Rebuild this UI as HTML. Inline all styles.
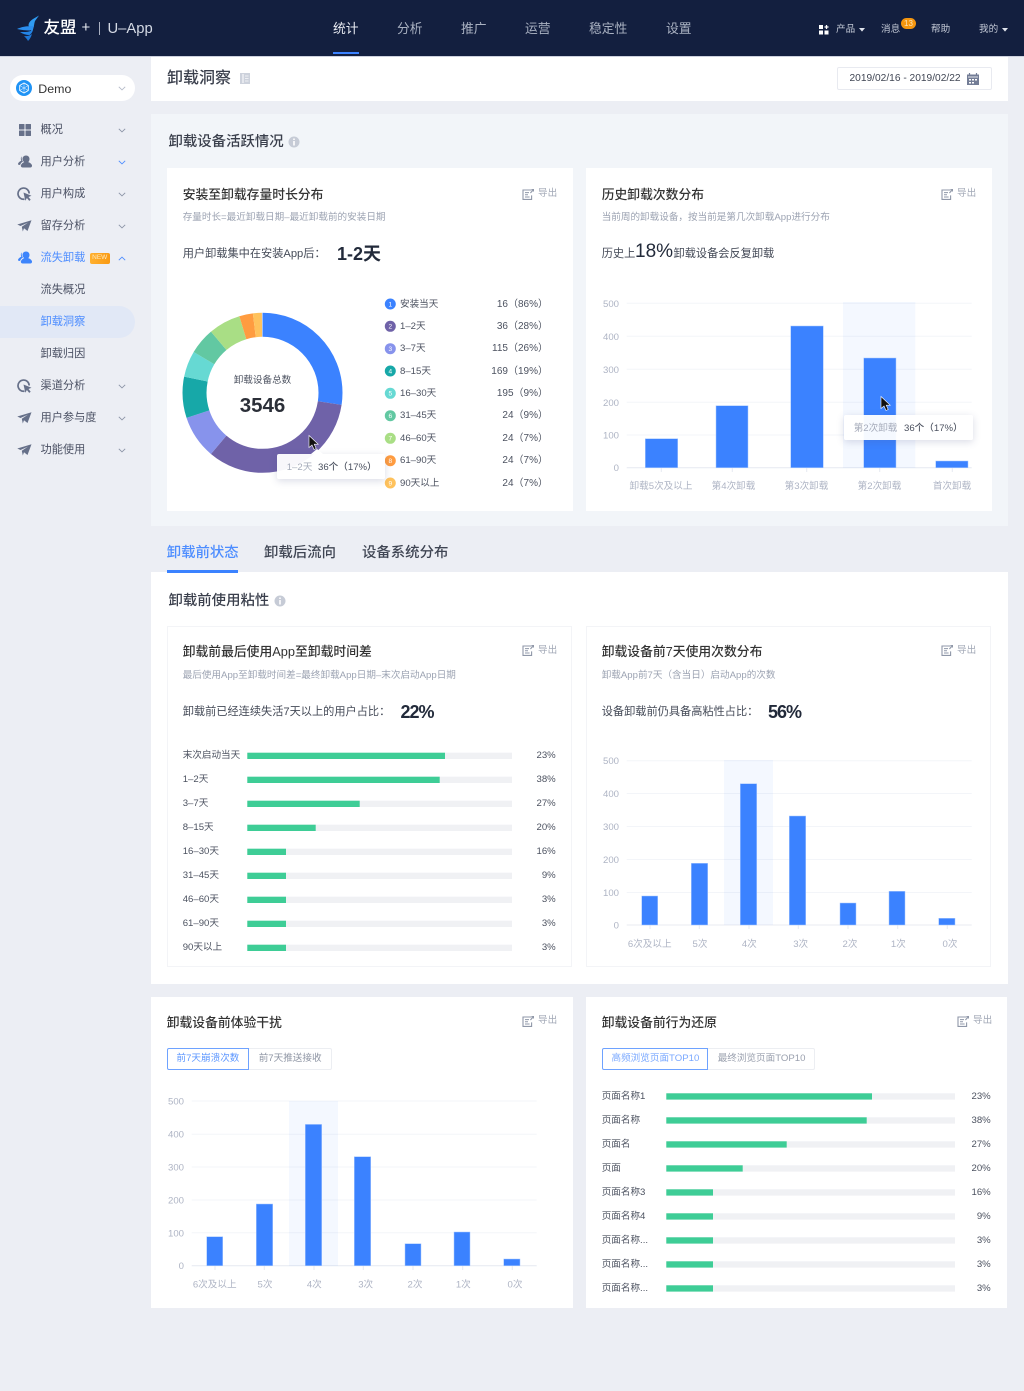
<!DOCTYPE html>
<html lang="zh-CN">
<head>
<meta charset="utf-8">
<title>卸载洞察</title>
<style>
html,body{margin:0;padding:0}
body{position:relative;width:1024px;height:1391px;overflow:hidden;background:#eceef4;font-family:"Liberation Sans","Noto Sans CJK SC",sans-serif;color:#3a3f4c}
.b{position:absolute}
.t{position:absolute;white-space:nowrap;line-height:20px;height:20px;font-size:9.6px;margin-top:.8px}
.r{text-align:right}
.nav{font-size:12.8px;color:#aab2c2}
.top{font-size:9.6px;color:#c3c9d6}
.side{font-size:11.2px;color:#4a5063;left:40.5px}
.blue{color:#4d8dff}
.ct{font-size:12.8px;color:#333;font-weight:500}
.sub{font-size:9.6px;color:#9ca3b2}
.lab{font-size:11.2px;color:#444a57}
.big{font-size:18px;letter-spacing:-1px;font-weight:bold;color:#222a3a}
.ex{font-size:9.6px;color:#a3a9b7}
.lg{font-size:9.6px;color:#4c5260}
.lg.r{font-size:10px;right:476px}
.hl{font-size:9.6px;color:#4c5260}
.sec{font-size:14.4px;color:#3a3f4c;font-weight:500}
svg{position:absolute;overflow:visible}
.tip{position:absolute;background:#fff;box-shadow:0 2px 8px rgba(70,80,130,.2);border-radius:2px}
</style>
</head>
<body>
<svg width="0" height="0" style="position:absolute">
<symbol id="exp" viewBox="0 0 12 12"><path d="M9.6 2H1v9.4h8.6V7.4" fill="none" stroke="#8f97a8" stroke-width="1.1"/><path d="M3 4.6h4M3 6.8h3M3 9h4.6" stroke="#8f97a8" stroke-width="1"/><path d="M8 4.6l2.4-2.6L9 1h3v3l-1-1-2.2 2.4z" fill="#8f97a8"/></symbol>
<symbol id="user" viewBox="0 0 14 13"><path d="M8 .5c2.2 0 3.5 1.6 3.5 3.5 0 1.300-.5 2.400-1.300 3.100 1.900.6 3.300 1.700 3.800 3.100.2.900-.4 2.300-1.700 2.300H4.800c-1.500 0-2.300-1.200-1.900-2.300.5-1.400 1.800-2.500 3.300-3.100C5.200 6.400 4.500 5.300 4.500 4 4.500 2 5.900.5 8 .5z" fill="currentColor"/><path d="M3.800 1.500C2.400 2.400 2.800 4.600 3.300 5.700 1.800 6.300.4 7.400.1 8.500c-.2.700.2 1.400 1 1.500l1.100-.2C2.600 8.200 3.700 7.200 5 6.500 3.800 5.200 3.300 3.200 3.800 1.500z" fill="currentColor"/></symbol>
<symbol id="cur" viewBox="0 0 15 14"><path d="M7.500 12.200A5.600 5.600 0 1 1 12.200 6.500" fill="none" stroke="currentColor" stroke-width="1.700"/><path d="M6.500 5.500l8 3.200-3 1.300 2.200 2.800-1.500 1.100-2.300-2.900-1.600 2.800z" fill="currentColor"/></symbol>
<symbol id="pl" viewBox="0 0 15 12"><path d="M.3 4.500L14.500.3 10.500 11 7 8.200 5.800 11.500 4.800 6.800 11 2.600 3.500 6z" fill="currentColor"/></symbol>
<symbol id="dn" viewBox="0 0 8 5"><path d="M.8.8L4 3.900 7.200.8" fill="none" stroke="currentColor" stroke-width=".9"/></symbol>
</svg>

<!-- header -->
<div class="b" style="left:0;top:0;width:1024px;height:56px;background:#131f3f"></div>
<div class="b" style="left:0;top:56px;width:1024px;height:1px;background:#cdd1de"></div>
<svg style="left:0;top:0" width="60" height="56">
<path d="M39 15.500L33 19c-3 2-4.500 4-4.500 6.500L32 32c2-4 2-8 3-11z" fill="#2f9bf2"/>
<path d="M17 29c4-2 9-3 17-3-1 3-2 4-4 4.500-4 0-9-.5-13-1.500z" fill="#2b8eee"/>
<path d="M20 32c4 0 8 .5 13-2-1 3-2 4-3.500 5-3.500 0-6.500-1-9.500-3z" fill="#2384e6"/>
<path d="M24 36c3 .5 5 0 8-2-1 3-2 5-4 7-1-2-2-3-4-5z" fill="#1e78d8"/>
</svg>
<div class="t" style="left:43.500px;top:17.500px;font-size:16.500px;color:#fff;font-weight:500">友盟</div>
<div class="t" style="left:81.500px;top:17.500px;font-size:15px;color:#e6e9f0">+</div>
<div class="b" style="left:98.500px;top:22px;width:1px;height:13px;background:#a8afc0"></div>
<div class="t" style="left:107.500px;top:18.500px;font-size:14.800px;color:#d5dae5">U–App</div>

<div class="t nav" style="left:333px;top:18.700px;color:#e8ebf2">统计</div>
<div class="b" style="left:333px;top:51.500px;width:25.500px;height:2.500px;background:#3b82ff"></div>
<div class="t nav" style="left:397px;top:18.700px">分析</div>
<div class="t nav" style="left:461px;top:18.700px">推广</div>
<div class="t nav" style="left:525px;top:18.700px">运营</div>
<div class="t nav" style="left:589px;top:18.700px">稳定性</div>
<div class="t nav" style="left:666px;top:18.700px">设置</div>

<svg style="left:819px;top:25px" width="10" height="10"><path d="M0 0h4v4H0zM0 5.500h4v4H0zM5.500 5.500h4v4h-4z" fill="#fff"/><path d="M7.500 0v4M5.500 2h4" stroke="#fff" stroke-width="1.300"/></svg>
<div class="t top" style="left:836px;top:19.700px">产品</div>
<svg style="left:858.500px;top:27.500px" width="6" height="4"><path d="M0 0h6L3 3.600z" fill="#dfe3ec"/></svg>
<div class="t top" style="left:881px;top:19.700px">消息</div>
<div class="b" style="left:901px;top:18px;width:15px;height:11px;border-radius:6px;background:#f5960f;color:#fde3b8;font-size:8px;line-height:11px;text-align:center">13</div>
<div class="t top" style="left:931px;top:19.700px">帮助</div>
<div class="t top" style="left:979px;top:19px">我的</div>
<svg style="left:1001.500px;top:27.500px" width="6" height="4"><path d="M0 0h6L3 3.600z" fill="#dfe3ec"/></svg>

<!-- sidebar -->
<div class="b" style="left:10px;top:75px;width:124.500px;height:26px;border-radius:13px;background:#fff"></div>
<svg style="left:16px;top:80px" width="16" height="16"><circle cx="8" cy="8" r="8" fill="#1f93f5"/><path d="M8 3l4.300 2.500v5L8 13l-4.300-2.500v-5z" fill="none" stroke="#fff" stroke-width=".9"/><path d="M3.700 5.500L12.300 10.500M12.300 5.500L3.700 10.500M8 3v10" stroke="#cfe8ff" stroke-width=".6"/></svg>
<div class="t" style="left:38.300px;top:78.500px;font-size:12.400px;color:#333">Demo</div>
<svg style="left:118px;top:86px;color:#b4bac8" width="8" height="5"><use href="#dn"/></svg>

<div class="b" style="left:0;top:305.500px;width:134.500px;height:32px;border-radius:0 16px 16px 0;background:#e1e8f6"></div>

<svg style="left:18.500px;top:124px" width="12" height="12"><path d="M.5 0h4.500a.5.500 0 0 1 .5.500V5a.5.500 0 0 1-.5.500H.5A.5.500 0 0 1 0 5V.5A.5.500 0 0 1 .5 0zM7 0h4.500a.5.500 0 0 1 .5.500V5a.5.500 0 0 1-.5.500H7a.5.500 0 0 1-.5-.5V.5A.5.500 0 0 1 7 0zM.5 6.500H5a.5.500 0 0 1 .5.500v4.500A.5.500 0 0 1 5 12H.5a.5.500 0 0 1-.5-.5V7a.5.500 0 0 1 .5-.5zM7 6.500h4.500A.5.500 0 0 1 12 7v4.500a.5.500 0 0 1-.5.500H7a.5.500 0 0 1-.5-.5V7a.5.500 0 0 1 .5-.5z" fill="#667089"/></svg>
<div class="t side" style="top:119.700px">概况</div>
<svg style="left:118px;top:127.500px;color:#8b93a6" width="8" height="5"><use href="#dn"/></svg>

<svg style="left:17.500px;top:155px;color:#667089" width="14" height="13"><use href="#user"/></svg>
<div class="t side" style="top:151.700px">用户分析</div>
<svg style="left:118px;top:159.500px;color:#4d8dff" width="8" height="5"><use href="#dn"/></svg>

<svg style="left:17px;top:187px;color:#667089" width="15" height="14"><use href="#cur"/></svg>
<div class="t side" style="top:183.700px">用户构成</div>
<svg style="left:118px;top:191.500px;color:#8b93a6" width="8" height="5"><use href="#dn"/></svg>

<svg style="left:17px;top:220px;color:#667089" width="15" height="12"><use href="#pl"/></svg>
<div class="t side" style="top:215.700px">留存分析</div>
<svg style="left:118px;top:223.500px;color:#8b93a6" width="8" height="5"><use href="#dn"/></svg>

<svg style="left:17.500px;top:251px;color:#3d84fb" width="14" height="13"><use href="#user"/></svg>
<div class="t side blue" style="top:247.700px">流失卸载</div>
<div class="b" style="left:90px;top:253px;width:19.500px;height:10.500px;border-radius:2px;background:linear-gradient(90deg,#ffb02e,#f99a14);color:#ffe9bd;font-size:6.500px;line-height:10.500px;text-align:center">NEW</div>
<svg style="left:118px;top:255.500px;color:#4d8dff;transform:rotate(180deg)" width="8" height="5"><use href="#dn"/></svg>

<div class="t side" style="top:279.700px">流失概况</div>
<div class="t side blue" style="top:311.700px">卸载洞察</div>
<div class="t side" style="top:343.700px">卸载归因</div>

<svg style="left:17px;top:379px;color:#667089" width="15" height="14"><use href="#cur"/></svg>
<div class="t side" style="top:375.700px">渠道分析</div>
<svg style="left:118px;top:383.500px;color:#8b93a6" width="8" height="5"><use href="#dn"/></svg>

<svg style="left:17px;top:412px;color:#667089" width="15" height="12"><use href="#pl"/></svg>
<div class="t side" style="top:407.700px">用户参与度</div>
<svg style="left:118px;top:415.500px;color:#8b93a6" width="8" height="5"><use href="#dn"/></svg>

<svg style="left:17px;top:444px;color:#667089" width="15" height="12"><use href="#pl"/></svg>
<div class="t side" style="top:439.700px">功能使用</div>
<svg style="left:118px;top:447.500px;color:#8b93a6" width="8" height="5"><use href="#dn"/></svg>

<!-- title bar -->
<div class="b" style="left:151px;top:57px;width:857px;height:44px;background:#fff"></div>
<div class="t" style="left:167px;top:68.500px;font-size:16px;color:#3a3f4c;font-weight:500">卸载洞察</div>
<svg style="left:240px;top:73px" width="10" height="11"><path d="M0 0h10v11H0z" fill="#cdd2dc"/><path d="M3 1v9" stroke="#fff"/><path d="M5 3h3.500M5 5.500h3.500M5 8h3.500" stroke="#eef0f4"/></svg>
<div class="b" style="left:837px;top:67px;width:152.700px;height:20.700px;border:1px solid #e8eaf0;border-radius:2px;background:#fff"></div>
<div class="t" style="left:849.500px;top:68.500px;font-size:10.200px;color:#3f4553">2019/02/16 - 2019/02/22</div>
<svg style="left:967px;top:72.500px" width="12" height="12"><path d="M0 1.500h12V12H0z" fill="#737d96"/><path d="M2.500 0v3M9.500 0v3" stroke="#737d96" stroke-width="1.200"/><path d="M1 4h10" stroke="#fff" stroke-width=".8"/><path d="M2 6h2v1.500H2zM5 6h2v1.500H5zM8 6h2v1.500H8zM2 9h2v1.500H2zM5 9h2v1.500H5z" fill="#fff"/></svg>

<!-- section 1 -->
<div class="b" style="left:151px;top:114px;width:857px;height:411.500px;background:#f2f5f9"></div>
<div class="t sec" style="left:168.500px;top:131.500px">卸载设备活跃情况</div>
<svg style="left:288px;top:136px" width="12" height="12"><circle cx="6" cy="6" r="5.500" fill="#c6cbd6"/><path d="M5.200 2.500h1.600v1.500H5.200zM5.200 5h1.600v4.500H5.200z" fill="#fff"/></svg>
<div class="b" style="left:167px;top:168px;width:405.500px;height:342.500px;background:#fff"></div>
<div class="b" style="left:585.500px;top:168px;width:406.500px;height:342.500px;background:#fff"></div>

<!-- section 2 -->
<div class="t" style="left:166.700px;top:542.500px;font-size:14.400px;color:#4d8dff;font-weight:500">卸载前状态</div>
<div class="t" style="left:264px;top:542.500px;font-size:14.400px;color:#3f4553;font-weight:500">卸载后流向</div>
<div class="t" style="left:362px;top:542.500px;font-size:14.400px;color:#3f4553;font-weight:500">设备系统分布</div>
<div class="b" style="left:151px;top:572px;width:857px;height:412px;background:#fff"></div>
<div class="b" style="left:166.700px;top:569.500px;width:71.800px;height:3px;background:#3b82ff"></div>
<div class="t sec" style="left:168.500px;top:590px">卸载前使用粘性</div>
<svg style="left:274px;top:594.500px" width="12" height="12"><circle cx="6" cy="6" r="5.500" fill="#c6cbd6"/><path d="M5.200 2.500h1.600v1.500H5.200zM5.200 5h1.600v4.500H5.200z" fill="#fff"/></svg>
<div class="b" style="left:166.700px;top:626px;width:403.600px;height:339.300px;border:1px solid #f3f4f7"></div>
<div class="b" style="left:585.500px;top:626px;width:403.500px;height:339.300px;border:1px solid #f3f4f7"></div>

<!-- bottom cards -->
<div class="b" style="left:151px;top:997px;width:421.500px;height:310.700px;background:#fff"></div>
<div class="b" style="left:585.500px;top:997px;width:421.500px;height:310.700px;background:#fff"></div>

<!-- card text -->
<div class="t ct" style="left:182.700px;top:184px">安装至卸载存量时长分布</div>
<div class="t sub" style="left:182.700px;top:207.700px">存量时长=最近卸载日期–最近卸载前的安装日期</div>
<div class="t lab" style="left:182.700px;top:243px">用户卸载集中在安装App后：</div>
<div class="t big" style="left:337px;top:243px;letter-spacing:0">1-2天</div>

<div class="t ct" style="left:601.700px;top:184px">历史卸载次数分布</div>
<div class="t sub" style="left:601.700px;top:207.700px">当前周的卸载设备，按当前是第几次卸载App进行分布</div>
<div class="t lab" style="left:601.700px;top:243.700px">历史上</div>
<div class="t" style="left:635px;top:241.500px;font-size:19px;color:#222a3a">18%</div>
<div class="t lab" style="left:673.500px;top:243.700px">卸载设备会反复卸载</div>

<div class="t ct" style="left:182.700px;top:641.700px">卸载前最后使用App至卸载时间差</div>
<div class="t sub" style="left:182.700px;top:665px">最后使用App至卸载时间差=最终卸载App日期–末次启动App日期</div>
<div class="t lab" style="left:182.700px;top:701.300px">卸载前已经连续失活7天以上的用户占比：</div>
<div class="t big" style="left:400.500px;top:701.300px">22%</div>

<div class="t ct" style="left:601.700px;top:641.700px">卸载设备前7天使用次数分布</div>
<div class="t sub" style="left:601.700px;top:665px">卸载App前7天（含当日）启动App的次数</div>
<div class="t lab" style="left:601.700px;top:701.300px">设备卸载前仍具备高粘性占比：</div>
<div class="t big" style="left:768px;top:701.300px">56%</div>

<div class="t ct" style="left:166.700px;top:1012.300px">卸载设备前体验干扰</div>
<div class="t ct" style="left:601.700px;top:1012.300px">卸载设备前行为还原</div>

<!-- export -->
<svg style="left:522px;top:188px" width="12" height="12"><use href="#exp"/></svg><div class="t ex" style="left:538px;top:183.700px">导出</div>
<svg style="left:941px;top:188px" width="12" height="12"><use href="#exp"/></svg><div class="t ex" style="left:957px;top:183.700px">导出</div>
<svg style="left:522px;top:644px" width="12" height="12"><use href="#exp"/></svg><div class="t ex" style="left:538px;top:640px">导出</div>
<svg style="left:941px;top:644px" width="12" height="12"><use href="#exp"/></svg><div class="t ex" style="left:957px;top:640px">导出</div>
<svg style="left:522px;top:1015px" width="12" height="12"><use href="#exp"/></svg><div class="t ex" style="left:538px;top:1010.700px">导出</div>
<svg style="left:957px;top:1015px" width="12" height="12"><use href="#exp"/></svg><div class="t ex" style="left:973px;top:1010.700px">导出</div>

<!-- toggle tabs -->
<div class="b" style="left:248px;top:1047.700px;width:81.700px;height:20.300px;border:1px solid #eceef2;border-radius:0 2px 2px 0"></div>
<div class="b" style="left:166.700px;top:1047.700px;width:80.300px;height:20.300px;border:1px solid #6ea2ff;border-radius:2px 0 0 2px;background:#fff"></div>
<div class="t" style="left:176.500px;top:1048.700px;color:#5d97ff">前7天崩溃次数</div>
<div class="t" style="left:258.700px;top:1048.700px;color:#8d94a3">前7天推送接收</div>
<div class="b" style="left:706px;top:1047.700px;width:106.700px;height:20.300px;border:1px solid #eceef2;border-radius:0 2px 2px 0"></div>
<div class="b" style="left:601.500px;top:1047.700px;width:104.200px;height:20.300px;border:1px solid #6ea2ff;border-radius:2px 0 0 2px;background:#fff"></div>
<div class="t" style="left:611.500px;top:1048.700px;color:#7aa8ff">高频浏览页面TOP10</div>
<div class="t" style="left:717.700px;top:1048.700px;color:#9aa0ae">最终浏览页面TOP10</div>

<!-- charts -->
<svg style="left:0;top:0" width="1024" height="1391">
<!-- donut -->
<g fill="none" stroke-width="24" transform="rotate(-90 262.500 392.800)">
<circle cx="262.500" cy="392.800" r="68" pathLength="360" stroke="#3b82ff" stroke-dasharray="98.800 360"/>
<circle cx="262.500" cy="392.800" r="68" pathLength="360" stroke="#6f62a8" stroke-dasharray="121.600 360" stroke-dashoffset="-98.800"/>
<circle cx="262.500" cy="392.800" r="68" pathLength="360" stroke="#8793ec" stroke-dasharray="31.600 360" stroke-dashoffset="-220.400"/>
<circle cx="262.500" cy="392.800" r="68" pathLength="360" stroke="#17a8a8" stroke-dasharray="30 360" stroke-dashoffset="-252"/>
<circle cx="262.500" cy="392.800" r="68" pathLength="360" stroke="#66d9d3" stroke-dasharray="19 360" stroke-dashoffset="-282"/>
<circle cx="262.500" cy="392.800" r="68" pathLength="360" stroke="#62c8a2" stroke-dasharray="19.300 360" stroke-dashoffset="-301"/>
<circle cx="262.500" cy="392.800" r="68" pathLength="360" stroke="#a9de85" stroke-dasharray="23.300 360" stroke-dashoffset="-320.300"/>
<circle cx="262.500" cy="392.800" r="68" pathLength="360" stroke="#ff9c40" stroke-dasharray="9.900 360" stroke-dashoffset="-343.600"/>
<circle cx="262.500" cy="392.800" r="68" pathLength="360" stroke="#ffc25c" stroke-dasharray="6.500 360" stroke-dashoffset="-353.500"/>
</g>
<!-- legend dots -->
<g font-size="6.500" text-anchor="middle" fill="#fff">
<circle cx="390.300" cy="304" r="5.500" fill="#3b82ff"/><text x="390.300" y="306.300">1</text>
<circle cx="390.300" cy="326.300" r="5.500" fill="#6f62a8"/><text x="390.300" y="328.600">2</text>
<circle cx="390.300" cy="348.700" r="5.500" fill="#8793ec"/><text x="390.300" y="351">3</text>
<circle cx="390.300" cy="371" r="5.500" fill="#17a8a8"/><text x="390.300" y="373.300">4</text>
<circle cx="390.300" cy="393.300" r="5.500" fill="#66d9d3"/><text x="390.300" y="395.600">5</text>
<circle cx="390.300" cy="415.700" r="5.500" fill="#62c8a2"/><text x="390.300" y="418">6</text>
<circle cx="390.300" cy="438.300" r="5.500" fill="#a9de85"/><text x="390.300" y="440.600">7</text>
<circle cx="390.300" cy="460.700" r="5.500" fill="#ff9c40"/><text x="390.300" y="463">8</text>
<circle cx="390.300" cy="483" r="5.500" fill="#ffc25c"/><text x="390.300" y="485.300">9</text>
</g>

<!-- chart 1 -->
<g stroke="#f3f5f9" stroke-width="1"><path d="M626.700 303.300H971.700M626.700 336.300H971.700M626.700 369.300H971.700M626.700 402.300H971.700M626.700 435H971.700"/></g>
<path d="M626.700 467.700H971.700" stroke="#e6e9f1"/>
<path d="M661.300 468v4M732.300 468v4M806.700 468v4M879.700 468v4M952.300 468v4" stroke="#e6e9f1"/>
<rect x="843" y="302" width="72.300" height="166" fill="#3b82ff" fill-opacity=".055"/>
<g fill="#3b82ff" stroke="#a8c8ff" stroke-width=".5">
<rect x="645.300" y="438.700" width="32.400" height="29"/><rect x="716" y="405.700" width="32" height="62"/><rect x="790.700" y="326" width="32.600" height="141.700"/><rect x="863.700" y="358" width="32.300" height="109.700"/><rect x="935.700" y="461" width="32.300" height="6.700"/>
</g>
<g font-size="9.600" fill="#aeb4c4" text-anchor="end">
<text x="619" y="306.800">500</text><text x="619" y="339.800">400</text><text x="619" y="372.800">300</text><text x="619" y="405.800">200</text><text x="619" y="438.500">100</text><text x="619" y="471.200">0</text>
</g>
<g font-size="9.600" fill="#aeb4c4" text-anchor="middle">
<text x="661" y="489.200">卸载5次及以上</text><text x="733.500" y="489.200">第4次卸载</text><text x="806.500" y="489.200">第3次卸载</text><text x="879.500" y="489.200">第2次卸载</text><text x="952" y="489.200">首次卸载</text>
</g>

<!-- chart 2 -->
<path d="M626.700 760.700H971.700M626.700 793.500H971.700M626.700 826.500H971.700M626.700 859.500H971.700M626.700 892.500H971.700" stroke="#f3f5f9"/>
<path d="M626.700 925H971.700" stroke="#e9ebf2"/>
<path d="M650 925v4M699.300 925v4M749 925v4M798.300 925v4M848 925v4M897.700 925v4M947.300 925v4" stroke="#e6e9f1"/>
<rect x="724" y="760" width="49" height="165" fill="#3b82ff" fill-opacity=".055"/>
<g fill="#3b82ff" stroke="#a8c8ff" stroke-width=".5">
<rect x="641.700" y="896" width="16" height="29"/><rect x="691.300" y="863.300" width="16.400" height="61.700"/><rect x="740.300" y="783.700" width="16.400" height="141.300"/><rect x="789.300" y="816" width="16.400" height="109"/><rect x="840" y="903" width="16" height="22"/><rect x="889" y="891.300" width="16" height="33.700"/><rect x="938.700" y="918.300" width="16.300" height="6.700"/>
</g>
<g font-size="9.600" fill="#aeb4c4" text-anchor="end">
<text x="619" y="764.200">500</text><text x="619" y="797">400</text><text x="619" y="830">300</text><text x="619" y="863">200</text><text x="619" y="896">100</text><text x="619" y="928.500">0</text>
</g>
<g font-size="9.600" fill="#aeb4c4" text-anchor="middle">
<text x="649.700" y="946.800">6次及以上</text><text x="700" y="946.800">5次</text><text x="749.300" y="946.800">4次</text><text x="800.700" y="946.800">3次</text><text x="850" y="946.800">2次</text><text x="898.300" y="946.800">1次</text><text x="950" y="946.800">0次</text>
</g>

<!-- chart 3 -->
<path d="M191.700 1101H536.700M191.700 1134.200H536.700M191.700 1167H536.700M191.700 1200H536.700M191.700 1232.800H536.700" stroke="#f3f5f9"/>
<path d="M191.700 1265.700H536.700" stroke="#e6e9f1"/>
<path d="M215 1266v4M264.300 1266v4M314 1266v4M363.300 1266v4M413 1266v4M462.700 1266v4M512.300 1266v4" stroke="#e6e9f1"/>
<rect x="289" y="1101" width="49" height="165" fill="#3b82ff" fill-opacity=".055"/>
<g fill="#3b82ff" stroke="#a8c8ff" stroke-width=".5">
<rect x="206.700" y="1236.700" width="16" height="29"/><rect x="256.300" y="1204" width="16.400" height="61.700"/><rect x="305.300" y="1124.400" width="16.400" height="141.300"/><rect x="354.300" y="1156.700" width="16.400" height="109"/><rect x="405" y="1243.700" width="16" height="22"/><rect x="454" y="1232" width="16" height="33.700"/><rect x="503.700" y="1259" width="16.300" height="6.700"/>
</g>
<g font-size="9.600" fill="#aeb4c4" text-anchor="end">
<text x="184" y="1104.500">500</text><text x="184" y="1137.700">400</text><text x="184" y="1170.500">300</text><text x="184" y="1203.500">200</text><text x="184" y="1236.300">100</text><text x="184" y="1269.200">0</text>
</g>
<g font-size="9.600" fill="#aeb4c4" text-anchor="middle">
<text x="214.700" y="1287.500">6次及以上</text><text x="265" y="1287.500">5次</text><text x="314.300" y="1287.500">4次</text><text x="365.700" y="1287.500">3次</text><text x="415" y="1287.500">2次</text><text x="463.300" y="1287.500">1次</text><text x="515" y="1287.500">0次</text>
</g>

<!-- hbars left -->
<g fill="#f0f1f4">
<rect x="247.300" y="752.700" width="264.700" height="6.300"/><rect x="247.300" y="776.700" width="264.700" height="6.300"/><rect x="247.300" y="800.700" width="264.700" height="6.300"/><rect x="247.300" y="824.700" width="264.700" height="6.300"/><rect x="247.300" y="848.700" width="264.700" height="6.300"/><rect x="247.300" y="872.700" width="264.700" height="6.300"/><rect x="247.300" y="896.700" width="264.700" height="6.300"/><rect x="247.300" y="920.700" width="264.700" height="6.300"/><rect x="247.300" y="944.700" width="264.700" height="6.300"/>
</g>
<g fill="#3ecd96">
<rect x="247.300" y="752.700" width="197.700" height="6.300"/><rect x="247.300" y="776.700" width="192.400" height="6.300"/><rect x="247.300" y="800.700" width="112.400" height="6.300"/><rect x="247.300" y="824.700" width="68.400" height="6.300"/><rect x="247.300" y="848.700" width="38.700" height="6.300"/><rect x="247.300" y="872.700" width="38.700" height="6.300"/><rect x="247.300" y="896.700" width="38.700" height="6.300"/><rect x="247.300" y="920.700" width="38.700" height="6.300"/><rect x="247.300" y="944.700" width="38.700" height="6.300"/>
</g>
<!-- hbars right -->
<g fill="#f0f1f4">
<rect x="666.300" y="1093.300" width="288.700" height="6.300"/><rect x="666.300" y="1117.300" width="288.700" height="6.300"/><rect x="666.300" y="1141.300" width="288.700" height="6.300"/><rect x="666.300" y="1165.300" width="288.700" height="6.300"/><rect x="666.300" y="1189.300" width="288.700" height="6.300"/><rect x="666.300" y="1213.300" width="288.700" height="6.300"/><rect x="666.300" y="1237.300" width="288.700" height="6.300"/><rect x="666.300" y="1261.300" width="288.700" height="6.300"/><rect x="666.300" y="1285.300" width="288.700" height="6.300"/>
</g>
<g fill="#3ecd96">
<rect x="666.300" y="1093.300" width="205.700" height="6.300"/><rect x="666.300" y="1117.300" width="200.400" height="6.300"/><rect x="666.300" y="1141.300" width="120.400" height="6.300"/><rect x="666.300" y="1165.300" width="76.400" height="6.300"/><rect x="666.300" y="1189.300" width="46.700" height="6.300"/><rect x="666.300" y="1213.300" width="46.700" height="6.300"/><rect x="666.300" y="1237.300" width="46.700" height="6.300"/><rect x="666.300" y="1261.300" width="46.700" height="6.300"/><rect x="666.300" y="1285.300" width="46.700" height="6.300"/>
</g>
</svg>

<!-- donut center -->
<div class="t" style="left:202.500px;width:120px;text-align:center;top:370px;color:#4c5260">卸载设备总数</div>
<div class="t" style="left:202.500px;width:120px;text-align:center;top:395px;font-size:20.500px;font-weight:bold;color:#2b2f38">3546</div>

<!-- legend -->
<div class="t lg" style="left:400px;top:294px">安装当天</div><div class="t lg r" style="top:294px">16（86%）</div>
<div class="t lg" style="left:400px;top:316.300px">1–2天</div><div class="t lg r" style="top:316.300px">36（28%）</div>
<div class="t lg" style="left:400px;top:338.700px">3–7天</div><div class="t lg r" style="top:338.700px">115（26%）</div>
<div class="t lg" style="left:400px;top:361px">8–15天</div><div class="t lg r" style="top:361px">169（19%）</div>
<div class="t lg" style="left:400px;top:383.300px">16–30天</div><div class="t lg r" style="top:383.300px">195（9%）</div>
<div class="t lg" style="left:400px;top:405.700px">31–45天</div><div class="t lg r" style="top:405.700px">24（9%）</div>
<div class="t lg" style="left:400px;top:428.300px">46–60天</div><div class="t lg r" style="top:428.300px">24（7%）</div>
<div class="t lg" style="left:400px;top:450.700px">61–90天</div><div class="t lg r" style="top:450.700px">24（7%）</div>
<div class="t lg" style="left:400px;top:473px">90天以上</div><div class="t lg r" style="top:473px">24（7%）</div>

<!-- hbar labels left -->
<div class="t hl" style="left:182.700px;top:745.700px">末次启动当天</div><div class="t hl r" style="right:468.300px;top:745.700px">23%</div>
<div class="t hl" style="left:182.700px;top:769.700px">1–2天</div><div class="t hl r" style="right:468.300px;top:769.700px">38%</div>
<div class="t hl" style="left:182.700px;top:793.700px">3–7天</div><div class="t hl r" style="right:468.300px;top:793.700px">27%</div>
<div class="t hl" style="left:182.700px;top:817.700px">8–15天</div><div class="t hl r" style="right:468.300px;top:817.700px">20%</div>
<div class="t hl" style="left:182.700px;top:841.700px">16–30天</div><div class="t hl r" style="right:468.300px;top:841.700px">16%</div>
<div class="t hl" style="left:182.700px;top:865.700px">31–45天</div><div class="t hl r" style="right:468.300px;top:865.700px">9%</div>
<div class="t hl" style="left:182.700px;top:889.700px">46–60天</div><div class="t hl r" style="right:468.300px;top:889.700px">3%</div>
<div class="t hl" style="left:182.700px;top:913.700px">61–90天</div><div class="t hl r" style="right:468.300px;top:913.700px">3%</div>
<div class="t hl" style="left:182.700px;top:937.700px">90天以上</div><div class="t hl r" style="right:468.300px;top:937.700px">3%</div>

<!-- hbar labels right -->
<div class="t hl" style="left:601.700px;top:1086.300px">页面名称1</div><div class="t hl r" style="right:33.300px;top:1086.300px">23%</div>
<div class="t hl" style="left:601.700px;top:1110.300px">页面名称</div><div class="t hl r" style="right:33.300px;top:1110.300px">38%</div>
<div class="t hl" style="left:601.700px;top:1134.300px">页面名</div><div class="t hl r" style="right:33.300px;top:1134.300px">27%</div>
<div class="t hl" style="left:601.700px;top:1158.300px">页面</div><div class="t hl r" style="right:33.300px;top:1158.300px">20%</div>
<div class="t hl" style="left:601.700px;top:1182.300px">页面名称3</div><div class="t hl r" style="right:33.300px;top:1182.300px">16%</div>
<div class="t hl" style="left:601.700px;top:1206.300px">页面名称4</div><div class="t hl r" style="right:33.300px;top:1206.300px">9%</div>
<div class="t hl" style="left:601.700px;top:1230.300px">页面名称...</div><div class="t hl r" style="right:33.300px;top:1230.300px">3%</div>
<div class="t hl" style="left:601.700px;top:1254.300px">页面名称...</div><div class="t hl r" style="right:33.300px;top:1254.300px">3%</div>
<div class="t hl" style="left:601.700px;top:1278.300px">页面名称...</div><div class="t hl r" style="right:33.300px;top:1278.300px">3%</div>

<!-- tooltips -->
<div class="tip" style="left:277px;top:453.700px;width:108px;height:25.300px;background:rgba(255,255,255,.95)"></div>
<svg style="left:311px;top:449px" width="12" height="5"><path d="M0 5L6 0l6 5z" fill="#fff"/></svg>
<div class="t" style="left:286.700px;top:457.300px;color:#a5abba">1–2天</div>
<div class="t" style="left:318px;top:457.300px;color:#4c5260;font-weight:500">36个（17%）</div>
<svg style="left:307.500px;top:435px" width="12" height="16"><path d="M1 .5v12l3-2.500 2 4.500 2.200-1-2-4.300h4z" fill="#111" stroke="#fff" stroke-width=".6"/></svg>

<div class="tip" style="left:843.700px;top:414.700px;width:129px;height:25.300px;background:rgba(255,255,255,.95)"></div>
<div class="t" style="left:853.700px;top:418.300px;color:#a5abba">第2次卸载</div>
<div class="t" style="left:904px;top:418.300px;color:#4c5260;font-weight:500">36个（17%）</div>
<svg style="left:879.500px;top:396px" width="12" height="16"><path d="M1 .5v12l3-2.500 2 4.500 2.200-1-2-4.300h4z" fill="#111" stroke="#fff" stroke-width=".6"/></svg>
</body>
</html>
